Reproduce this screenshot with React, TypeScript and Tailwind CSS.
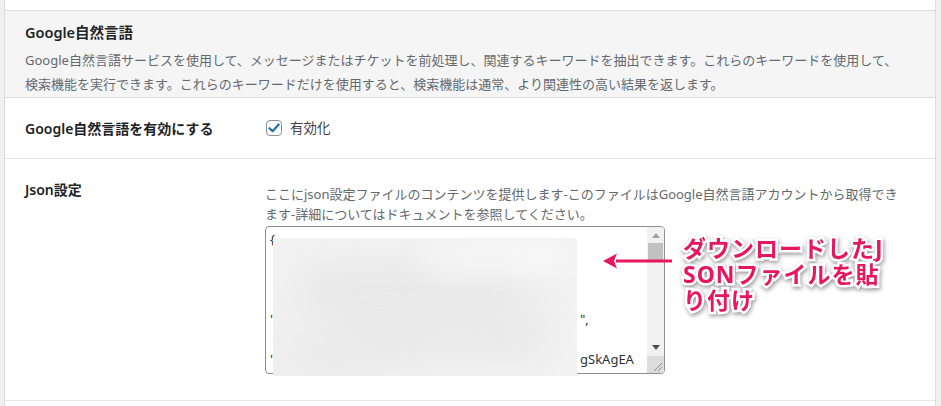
import React from 'react';

const font = { fontFamily: '"Noto Sans", "Noto Sans CJK JP", sans-serif' };

const JsonBox: React.FC = () => {
  // most of each line sits under the blurred patch; only the tails show
  const lines: { head: string; tail?: string }[] = [
    { head: '{' },
    { head: '' },
    { head: '' },
    { head: '' },
    { head: '"', tail: '",' },
    { head: '' },
    { head: '"', tail: 'gSkAgEA' },
    { head: '', tail: 'tu+5DJU' },
  ];

  return (
    <div className="relative mt-[2px] w-[400px]">
      <div className="flex h-[148px] w-[400px] overflow-hidden rounded-[4px] border border-[#8c8f94] bg-white">
        <div className="flex-1 overflow-hidden pl-[4px] pt-[2px] text-[13px] leading-[20px] text-[#2c3338]">
          {lines.map((l, i) => (
            <div key={i} className="flex h-[20px] whitespace-nowrap">
              {l.tail ? (
                <>
                  <span className="inline-block w-[310px] flex-none">{l.head}</span>
                  <span className="flex-none">{l.tail}</span>
                </>
              ) : (
                <span>{l.head}</span>
              )}
            </div>
          ))}
        </div>
        {/* scrollbar */}
        <div className="flex w-[17px] flex-none flex-col bg-[#f1f1f1]">
          <div className="flex h-[16px] items-center justify-center">
            <svg width="8" height="5" viewBox="0 0 8 5">
              <path d="M0 5 L4 0 L8 5 Z" fill="#a3a3a3" />
            </svg>
          </div>
          <div className="mx-[1px] h-[17px] bg-[#c1c1c1]" />
          <div className="flex-1" />
          <div className="flex h-[17px] items-center justify-center">
            <svg width="8" height="5" viewBox="0 0 8 5">
              <path d="M0 0 L8 0 L4 5 Z" fill="#505050" />
            </svg>
          </div>
          <div className="flex h-[17px] items-end justify-end bg-[#dcdcdc] p-[2px]">
            <svg width="9" height="9" viewBox="0 0 9 9">
              <path d="M9 1 L1 9 M9 5 L5 9" stroke="#8a8a8a" strokeWidth="1" />
            </svg>
          </div>
        </div>
      </div>
      {/* blurred patch over the key contents */}
      <div className="absolute left-[8px] top-[12px] h-[138px] w-[304px] overflow-hidden bg-[#f3f3f3]">
        <div className="absolute left-[20px] top-[30px] h-[40px] w-[240px] rounded-full bg-[#e4e4e4] blur-xl" />
        <div className="absolute left-[60px] top-[80px] h-[40px] w-[220px] rounded-full bg-[#e6e6e6] blur-xl" />
        <div className="absolute left-[-10px] top-[100px] h-[40px] w-[120px] rounded-full bg-[#e9e9e9] blur-xl" />
        <div className="absolute left-[150px] top-[5px] h-[30px] w-[150px] rounded-full bg-[#f8f8f8] blur-lg" />
      </div>
    </div>
  );
};

const Callout: React.FC = () => (
  <>
    <svg className="absolute left-[602px] top-[252px]" width="72" height="18" viewBox="0 0 72 18">
      <path d="M14 7.5 H70 V10.5 H14 Z" fill="#e8175d" />
      <path d="M1 9 L15 1.5 L12 9 L15 16.5 Z" fill="#e8175d" />
    </svg>
    <div
      className="absolute left-[683px] top-[235px] text-[23px] font-bold leading-[26px] tracking-[1px] text-[#e8175d] [paint-order:stroke_fill] [-webkit-text-stroke:5px_white] drop-shadow-[1px_2px_2px_rgba(0,0,0,0.4)]"
      style={font}
    >
      ダウンロードしたJ
      <br />
      SONファイルを貼
      <br />
      り付け
    </div>
  </>
);

export default function App() {
  return (
    <div className="relative h-[406px] w-[941px] overflow-hidden bg-[#f0f0f1]" style={font}>
      <div className="ml-[4px] w-[932px] border-x border-[#dcdcde] bg-white">
        <div className="h-[10px]" />
        {/* section header */}
        <div className="border-y border-[#dcdcde] bg-[#f5f5f5] px-[20px] pb-[1px] pt-[11px]">
          <div className="text-[14.5px] font-semibold leading-[20px] text-[#1d2327]">Google自然言語</div>
          <div className="mt-[6px] whitespace-nowrap text-[13px] leading-[24px] text-[#646970]">
            Google自然言語サービスを使用して、メッセージまたはチケットを前処理し、関連するキーワードを抽出できます。これらのキーワードを使用して、
            <br />
            検索機能を実行できます。これらのキーワードだけを使用すると、検索機能は通常、より関連性の高い結果を返します。
          </div>
        </div>
        {/* enable row */}
        <div className="flex h-[61px] items-center border-b border-[#e5e5e5] px-[20px]">
          <div className="w-[240px] text-[14px] font-semibold text-[#1d2327]">Google自然言語を有効にする</div>
          <div className="flex items-center gap-[8px] pl-[1px]">
            <span className="flex h-[16px] w-[16px] items-center justify-center rounded-[4px] border border-[#8c8f94] bg-white">
              <svg width="12" height="12" viewBox="0 0 12 12">
                <path d="M1.5 6.2 L4.6 9.2 L10.6 2.4" fill="none" stroke="#2271b1" strokeWidth="2.2" strokeLinecap="round" strokeLinejoin="round" />
              </svg>
            </span>
            <span className="text-[13.5px] text-[#3c434a]">有効化</span>
          </div>
        </div>
        {/* json row */}
        <div className="flex h-[242px] border-b border-[#e5e5e5] px-[20px]">
          <div className="w-[240px] pt-[21px] text-[14px] font-semibold leading-[20px] text-[#1d2327]">Json設定</div>
          <div className="pt-[25px]">
            <div className="whitespace-nowrap text-[13px] leading-[20px] text-[#646970]">
              ここにjson設定ファイルのコンテンツを提供します-このファイルはGoogle自然言語アカウントから取得でき
              <br />
              ます-詳細についてはドキュメントを参照してください。
            </div>
            <JsonBox />
          </div>
        </div>
        <div className="h-[10px]" />
      </div>
      <Callout />
    </div>
  );
}
